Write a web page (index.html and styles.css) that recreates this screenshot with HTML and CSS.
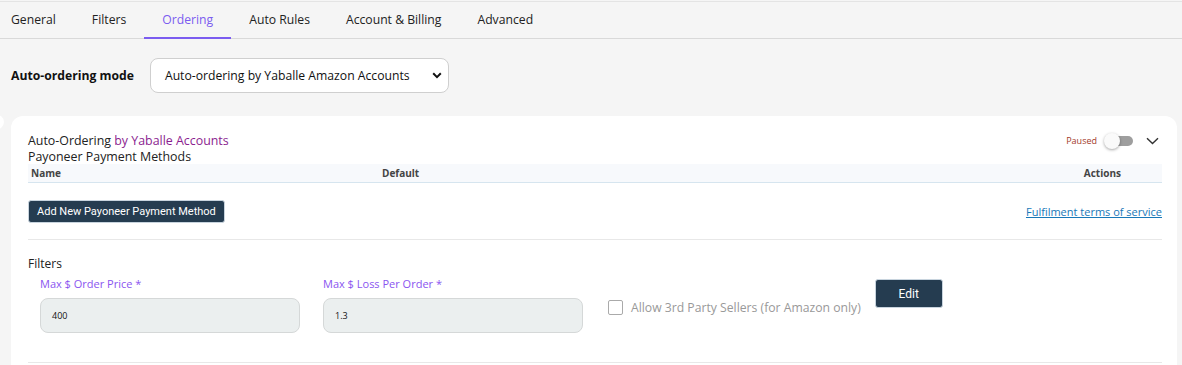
FILE: index.html
```html
<!DOCTYPE html>
<html lang="en">
<head>
  <meta charset="UTF-8" />
  <title>Settings - Ordering</title>
  <meta name="viewport" content="width=device-width, initial-scale=1.0" />
  <link rel="stylesheet" href="styles.css">
</head>
<body>
  <div class="tabs">
    <a class="tab">General</a>
    <a class="tab">Filters</a>
    <a class="tab active">Ordering</a>
    <a class="tab">Auto Rules</a>
    <a class="tab">Account &amp; Billing</a>
    <a class="tab">Advanced</a>
  </div>

  <div class="mode-row">
    <label class="mode-label">Auto-ordering mode</label>
    <div class="mode-select">
      <span>Auto-ordering by Yaballe Amazon Accounts</span>
      <svg width="10" height="7" viewBox="0 0 10 7"><path d="M1.2 1.3 5 5.1 8.8 1.3" fill="none" stroke="#111" stroke-width="2"/></svg>
    </div>
  </div>

  <div class="card">
    <span class="card-nub"></span>
    <div class="card-head">
      <div>
        <div class="card-title">Auto-Ordering <span class="accent">by Yaballe Accounts</span></div>
        <div class="card-sub">Payoneer Payment Methods</div>
      </div>
      <div class="card-controls">
        <span class="paused">Paused</span>
        <span class="toggle"><span class="knob"></span></span>
        <svg width="13" height="8" viewBox="0 0 13 8"><path d="M1 1.2 6.5 6.6 12 1.2" fill="none" stroke="#333" stroke-width="1.4"/></svg>
      </div>
    </div>

    <div class="table-head">
      <span class="col-name">Name</span>
      <span class="col-default">Default</span>
      <span class="col-actions">Actions</span>
    </div>

    <div class="methods-row">
      <button class="dark-btn add-btn">Add New Payoneer Payment Method</button>
      <a class="terms-link" href="#">Fulfilment terms of service</a>
    </div>

    <div class="filters">
      <div class="filters-title">Filters</div>
      <div class="filters-row">
        <div class="field">
          <label>Max $ Order Price *</label>
          <div class="field-input">400</div>
        </div>
        <div class="field">
          <label>Max $ Loss Per Order *</label>
          <div class="field-input">1.3</div>
        </div>
        <div class="check">
          <span class="box"></span>
          <span>Allow 3rd Party Sellers (for Amazon only)</span>
        </div>
        <button class="dark-btn edit-btn">Edit</button>
      </div>
    </div>
  </div>
</body>
</html>
```

FILE: styles.css
```css
body {
  margin: 0;
  font-family: 'Open Sans', 'Noto Sans', sans-serif;
  background: #f5f5f5;
  color: #222;
  overflow: hidden;
}

.tabs {
  display: flex;
  height: 36px;
  margin-top: 1px;
  border-top: 1px solid #e4e4e4;
  border-bottom: 1px solid #d9d9d9;
}

.tab {
  display: flex;
  align-items: center;
  padding: 0 18px;
  font-size: 12.2px;
  color: #222;
  border-bottom: 2px solid transparent;
  margin-bottom: -1px;
}

.tab:first-child {
  padding-left: 11px;
}

.tab.active {
  color: #7b5cf0;
  border-bottom-color: #7b5cf0;
}

.mode-row {
  display: flex;
  align-items: center;
  padding: 19px 0 0 11px;
  gap: 16px;
}

.mode-label {
  font-size: 12.2px;
  font-weight: bold;
  color: #111;
}

.mode-select {
  width: 299px;
  height: 35px;
  box-sizing: border-box;
  border: 1px solid #cfcfcf;
  border-radius: 8px;
  background: #fff;
  display: flex;
  align-items: center;
  justify-content: space-between;
  padding: 0 6px 0 14px;
  font-size: 12.2px;
  color: #111;
}

.card {
  position: relative;
  margin: 23px 5px 0 11px;
  background: #fff;
  border-radius: 12px 12px 0 0;
  padding: 17px 15px 0 17px;
  height: 260px;
}

.card-nub {
  position: absolute;
  left: -26px;
  top: -2px;
  width: 19px;
  height: 16px;
  border-radius: 50%;
  background: #fff;
}

.card-head {
  display: flex;
  justify-content: space-between;
  align-items: flex-start;
}

.card-title, .card-sub {
  font-size: 12.4px;
  line-height: 16px;
  color: #222;
}

.card-sub {
  line-height: 15px;
}

.accent {
  color: #8b1e8f;
}

.card-controls {
  display: flex;
  align-items: center;
  gap: 9px;
  padding-top: 1px;
  margin-right: 3px;
}

.paused {
  font-size: 9px;
  color: #a33a2a;
}

.toggle {
  position: relative;
  width: 27px;
  height: 10px;
  border-radius: 5px;
  background: #9e9e9e;
  margin-right: 4px;
}

.knob {
  position: absolute;
  left: -2px;
  top: -3px;
  width: 16px;
  height: 16px;
  border-radius: 50%;
  background: #fafafa;
  box-shadow: 0 1px 3px rgba(0, 0, 0, 0.35);
}

.table-head {
  display: flex;
  align-items: center;
  height: 18px;
  background: #f7f9fc;
  border-bottom: 1px solid #d6e5ef;
  font-size: 10px;
  font-weight: bold;
  color: #444;
}

.col-name {
  padding-left: 3px;
  width: 351px;
}

.col-default {
  flex: 1;
}

.col-actions {
  padding-right: 41px;
}

.methods-row {
  display: flex;
  justify-content: space-between;
  align-items: center;
  padding: 17px 0 16px;
  border-bottom: 1px solid #e8e8e8;
}

.dark-btn {
  background: #253c50;
  color: #fff;
  border: 1px solid #c8d4de;
  border-radius: 3px;
  font-family: 'Roboto', sans-serif;
  cursor: pointer;
}

.add-btn {
  height: 23px;
  padding: 0 8px;
  font-size: 11px;
}

.terms-link {
  font-size: 11px;
  color: #1878b8;
  text-decoration: underline;
}

.filters {
  padding-top: 15px;
  border-bottom: 1px solid #e8e8e8;
  height: 107px;
}

.filters-title {
  font-size: 12px;
  color: #222;
}

.filters-row {
  display: flex;
  align-items: center;
  padding-left: 12px;
  gap: 23px;
  margin-top: 4px;
}

.field {
  display: flex;
  flex-direction: column;
  gap: 7px;
}

.field label {
  font-size: 11px;
  color: #8a55f0;
}

.field-input {
  width: 260px;
  height: 35px;
  box-sizing: border-box;
  border: 1px solid #d5d8d8;
  border-radius: 8px;
  background: #ebefef;
  display: flex;
  align-items: center;
  padding-left: 11px;
  font-size: 9px;
  color: #111;
}

.check {
  display: flex;
  align-items: center;
  gap: 8px;
  font-size: 12.2px;
  color: #999;
  margin-left: 2px;
  margin-top: 5px;
}

.box {
  width: 13px;
  height: 13px;
  border: 1px solid #aaa;
  border-radius: 2px;
}

.edit-btn {
  width: 68px;
  height: 29px;
  font-size: 12px;
  margin-left: -9px;
  margin-bottom: 22px;
}
```
